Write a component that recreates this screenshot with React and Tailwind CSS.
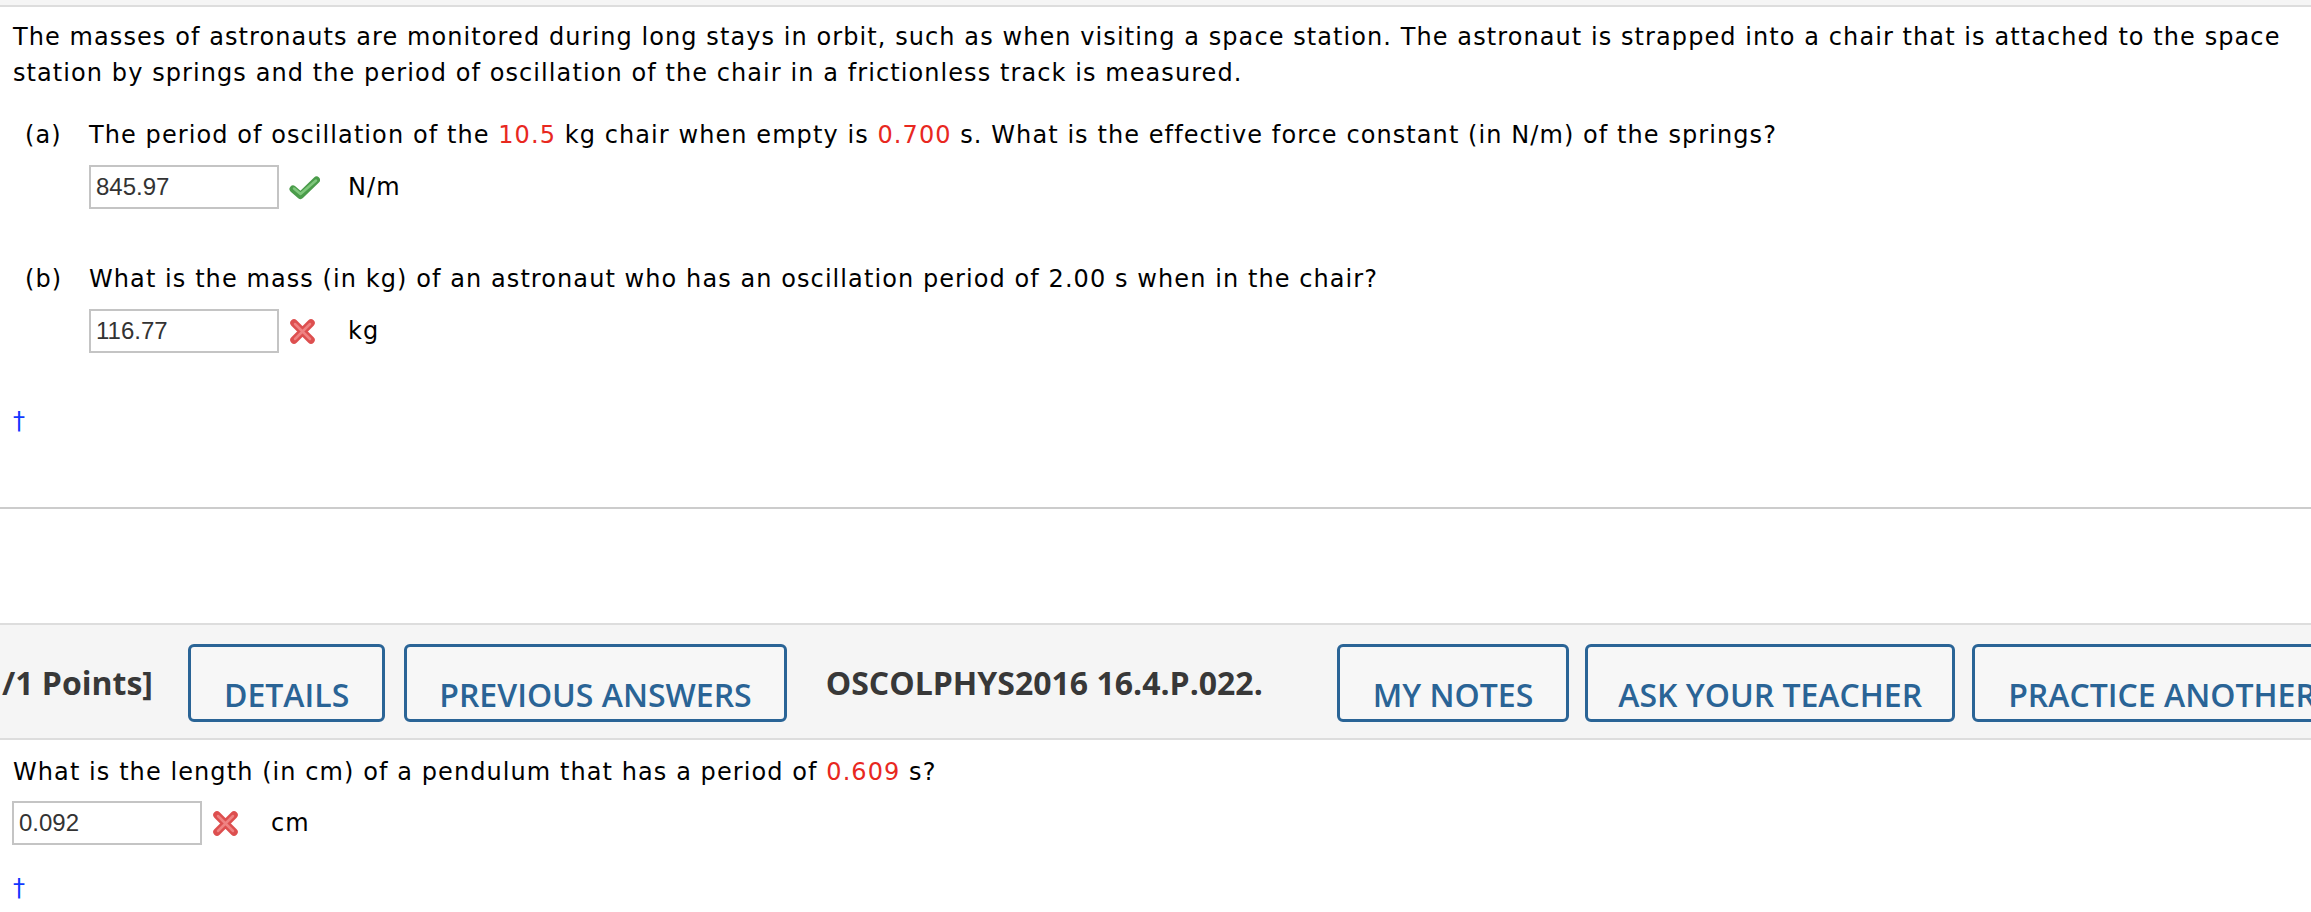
const Check = () => (
  <svg width="31" height="25" viewBox="0 0 31 25" className="shrink-0">
    <path d="M4 14 L11.5 20.5 L27.5 5" fill="none" stroke="#4a9c4a" strokeWidth="7" strokeLinecap="round" strokeLinejoin="round" />
    <path d="M5 13.5 L11.5 19 L27 5.5" fill="none" stroke="#7fc77c" strokeWidth="2.5" strokeLinecap="round" strokeLinejoin="round" />
  </svg>
);

const Cross = () => (
  <svg width="27" height="25" viewBox="0 0 27 25" className="shrink-0">
    <path d="M5 4 L22 21 M22 4 L5 21" fill="none" stroke="#dd4f4f" strokeWidth="7.5" strokeLinecap="round" />
    <path d="M6 5 L21 20 M21 5 L6 20" fill="none" stroke="#ef8282" strokeWidth="2.5" strokeLinecap="round" />
  </svg>
);

const Answer = ({ value, ok, unit }) => (
  <div className="flex items-center h-[44px]">
    <div className="w-[190px] h-[44px] border-2 border-[#c4c4c4] bg-white pl-[5px] flex items-center font-['Liberation_Sans',Arial,sans-serif] tracking-normal text-[24px] text-[#333333]">
      {value}
    </div>
    <div className="ml-[10px] w-[31px] flex items-center">{ok ? <Check /> : <Cross />}</div>
    <span className="ml-[28px]">{unit}</span>
  </div>
);

const Red = ({ children }) => <span className="text-[#e8281f]">{children}</span>;

const Part = ({ label, className, children, answer }) => (
  <div className={`flex ${className}`}>
    <span className="w-[64px] ml-[12px] shrink-0">{label}</span>
    <div>
      <p>{children}</p>
      <div className="mt-[12px]">{answer}</div>
    </div>
  </div>
);

const Btn = ({ children, className = '' }) => (
  <button className={`h-[78px] border-[3px] border-[#2a6496] rounded-[6px] pt-[24px] leading-[44px] text-[32px] font-semibold text-[#2a6496] bg-[#f7f7f7] whitespace-nowrap shrink-0 ${className}`}>
    {children}
  </button>
);

export default function App() {
  return (
    <div className="w-[2311px] h-[912px] overflow-hidden bg-white text-black text-[24px] leading-[36px] tracking-[1.08px] font-['Verdana','DejaVu_Sans',sans-serif]">
      <div className="h-[7px] bg-[#f5f5f5] border-b-2 border-[#dddddd]" />

      <div className="pl-[13px] pt-[12px]">
        <p className="whitespace-nowrap">
          The masses of astronauts are monitored during long stays in orbit, such as when visiting a space station. The astronaut is strapped into a chair that is attached to the space
          <br />
          station by springs and the period of oscillation of the chair in a frictionless track is measured.
        </p>

        <Part label="(a)" className="mt-[26px]" answer={<Answer value="845.97" ok unit="N/m" />}>
          The period of oscillation of the <Red>10.5</Red> kg chair when empty is <Red>0.700</Red> s. What is the effective force constant (in N/m) of the springs?
        </Part>

        <Part label="(b)" className="mt-[52px]" answer={<Answer value="116.77" unit="kg" />}>
          What is the mass (in kg) of an astronaut who has an oscillation period of 2.00 s when in the chair?
        </Part>

        <div className="mt-[50px] text-[#1238ff]">†</div>
      </div>

      <div className="mt-[68px] border-t-2 border-[#cccccc]" />

      <div className="mt-[114px] h-[117px] border-y-2 border-[#dddddd] bg-[#f5f5f5] pt-[19px] flex items-start font-['Open_Sans',sans-serif] tracking-normal overflow-hidden">
        <span className="ml-[2px] mt-[17px] leading-[44px] text-[32px] font-bold text-[#383838] whitespace-nowrap shrink-0">/1 Points]</span>
        <Btn className="ml-[35px] px-[33px]">DETAILS</Btn>
        <Btn className="ml-[19px] px-[32px]">PREVIOUS ANSWERS</Btn>
        <span className="ml-[39px] mt-[17px] leading-[44px] text-[32px] font-bold text-[#383838] whitespace-nowrap shrink-0">OSCOLPHYS2016 16.4.P.022.</span>
        <Btn className="ml-[74px] px-[33px]">MY NOTES</Btn>
        <Btn className="ml-[16px] px-[30px]">ASK YOUR TEACHER</Btn>
        <Btn className="ml-[17px] px-[33px]">PRACTICE ANOTHER</Btn>
      </div>

      <div className="pl-[13px] mt-[14px]">
        <p>
          What is the length (in cm) of a pendulum that has a period of <Red>0.609</Red> s?
        </p>
        <div className="mt-[11px] -ml-[1px]">
          <Answer value="0.092" unit="cm" />
        </div>
        <div className="mt-[25px] text-[#1238ff]">†</div>
      </div>
    </div>
  );
}
